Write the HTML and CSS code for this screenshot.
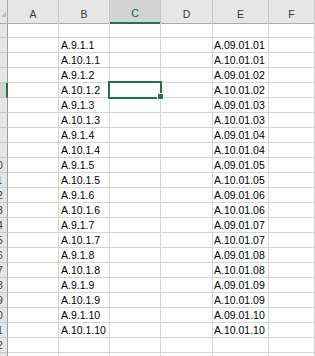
FILE: index.html
```html
<!DOCTYPE html>
<html>
<head>
<meta charset="utf-8">
<link rel="stylesheet" href="styles.css">
</head>
<body>
<div class="sheet">
  <div class="row head">
    <div class="corner"><svg class="tri" width="8" height="23" viewBox="0 0 8 23"><polygon points="6,12 6,17 1,17" fill="#b8b8b8"/></svg></div>
    <div class="ch">A</div><div class="ch">B</div><div class="ch sel">C</div><div class="ch">D</div><div class="ch">E</div><div class="ch">F</div>
  </div>
  <div class="row"><div class="rh"><span class="rn">1</span></div><div class="c"></div><div class="c"></div><div class="c"></div><div class="c"></div><div class="c"></div><div class="c"></div></div>
  <div class="row"><div class="rh"><span class="rn">2</span></div><div class="c"></div><div class="c">A.9.1.1</div><div class="c"></div><div class="c"></div><div class="c e">A.09.01.01</div><div class="c"></div></div>
  <div class="row"><div class="rh"><span class="rn">3</span></div><div class="c"></div><div class="c">A.10.1.1</div><div class="c"></div><div class="c"></div><div class="c e">A.10.01.01</div><div class="c"></div></div>
  <div class="row"><div class="rh"><span class="rn">4</span></div><div class="c"></div><div class="c">A.9.1.2</div><div class="c"></div><div class="c"></div><div class="c e">A.09.01.02</div><div class="c"></div></div>
  <div class="row"><div class="rh selrow"><span class="rn">5</span></div><div class="c"></div><div class="c">A.10.1.2</div><div class="c"></div><div class="c"></div><div class="c e">A.10.01.02</div><div class="c"></div></div>
  <div class="row"><div class="rh"><span class="rn">6</span></div><div class="c"></div><div class="c">A.9.1.3</div><div class="c"></div><div class="c"></div><div class="c e">A.09.01.03</div><div class="c"></div></div>
  <div class="row"><div class="rh"><span class="rn">7</span></div><div class="c"></div><div class="c">A.10.1.3</div><div class="c"></div><div class="c"></div><div class="c e">A.10.01.03</div><div class="c"></div></div>
  <div class="row"><div class="rh"><span class="rn">8</span></div><div class="c"></div><div class="c">A.9.1.4</div><div class="c"></div><div class="c"></div><div class="c e">A.09.01.04</div><div class="c"></div></div>
  <div class="row"><div class="rh"><span class="rn">9</span></div><div class="c"></div><div class="c">A.10.1.4</div><div class="c"></div><div class="c"></div><div class="c e">A.10.01.04</div><div class="c"></div></div>
  <div class="row"><div class="rh"><span class="rn">10</span></div><div class="c"></div><div class="c">A.9.1.5</div><div class="c"></div><div class="c"></div><div class="c e">A.09.01.05</div><div class="c"></div></div>
  <div class="row"><div class="rh"><span class="rn">11</span></div><div class="c"></div><div class="c">A.10.1.5</div><div class="c"></div><div class="c"></div><div class="c e">A.10.01.05</div><div class="c"></div></div>
  <div class="row"><div class="rh"><span class="rn">12</span></div><div class="c"></div><div class="c">A.9.1.6</div><div class="c"></div><div class="c"></div><div class="c e">A.09.01.06</div><div class="c"></div></div>
  <div class="row"><div class="rh"><span class="rn">13</span></div><div class="c"></div><div class="c">A.10.1.6</div><div class="c"></div><div class="c"></div><div class="c e">A.10.01.06</div><div class="c"></div></div>
  <div class="row"><div class="rh"><span class="rn">14</span></div><div class="c"></div><div class="c">A.9.1.7</div><div class="c"></div><div class="c"></div><div class="c e">A.09.01.07</div><div class="c"></div></div>
  <div class="row"><div class="rh"><span class="rn">15</span></div><div class="c"></div><div class="c">A.10.1.7</div><div class="c"></div><div class="c"></div><div class="c e">A.10.01.07</div><div class="c"></div></div>
  <div class="row"><div class="rh"><span class="rn">16</span></div><div class="c"></div><div class="c">A.9.1.8</div><div class="c"></div><div class="c"></div><div class="c e">A.09.01.08</div><div class="c"></div></div>
  <div class="row"><div class="rh"><span class="rn">17</span></div><div class="c"></div><div class="c">A.10.1.8</div><div class="c"></div><div class="c"></div><div class="c e">A.10.01.08</div><div class="c"></div></div>
  <div class="row"><div class="rh"><span class="rn">18</span></div><div class="c"></div><div class="c">A.9.1.9</div><div class="c"></div><div class="c"></div><div class="c e">A.09.01.09</div><div class="c"></div></div>
  <div class="row"><div class="rh"><span class="rn">19</span></div><div class="c"></div><div class="c">A.10.1.9</div><div class="c"></div><div class="c"></div><div class="c e">A.10.01.09</div><div class="c"></div></div>
  <div class="row"><div class="rh"><span class="rn">20</span></div><div class="c"></div><div class="c">A.9.1.10</div><div class="c"></div><div class="c"></div><div class="c e">A.09.01.10</div><div class="c"></div></div>
  <div class="row"><div class="rh"><span class="rn">21</span></div><div class="c"></div><div class="c">A.10.1.10</div><div class="c"></div><div class="c"></div><div class="c e">A.10.01.10</div><div class="c"></div></div>
  <div class="row"><div class="rh"><span class="rn">22</span></div><div class="c"></div><div class="c"></div><div class="c"></div><div class="c"></div><div class="c"></div><div class="c"></div></div>
  <div class="row"><div class="rh"><span class="rn">23</span></div><div class="c"></div><div class="c"></div><div class="c"></div><div class="c"></div><div class="c"></div><div class="c"></div></div>
  <div class="selbox"></div>
  <div class="handle"></div>
</div>
</body>
</html>
```
FILE: styles.css
```css
* { box-sizing: border-box; }
html, body { margin: 0; padding: 0; background: #fff; overflow: hidden; }
body {
  font-family: "Liberation Sans", Arial, sans-serif;
  font-size: 10.5px;
  color: #000;
}
.sheet { position: relative; width: 315px; }
.row {
  display: grid;
  grid-template-columns: 8px 51px 51px 51px 52px 56px 1fr;
  height: 15px;
}
.row.head { height: 23px; }
.corner {
  background: #e6e6e6;
  border-right: 1px solid #a8a8a8;
  border-bottom: 1px solid #ababab;
  position: relative;
}
.tri { display: block; }
.ch {
  background: #e6e6e6;
  border-right: 1px solid #c8c8c8;
  border-bottom: 1px solid #ababab;
  display: flex;
  align-items: flex-end;
  justify-content: center;
  padding-bottom: 2px;
  line-height: 13px;
  color: #3a3a3a;
}
.ch.sel {
  background: #d3d3d3;
  border-bottom: 2px solid #217346;
  color: #1f5c3a;
}
.rh {
  background: #e6e6e6;
  border-right: 1px solid #9e9e9e;
  border-bottom: 1px solid #c8c8c8;
  overflow: hidden;
  line-height: 13px;
  padding-top: 1px;
}
.rh.selrow {
  background: #d3d3d3;
  border-right: 2px solid #217346;
}
.rn {
  display: block;
  width: 20px;
  margin-left: -13px;
  text-align: center;
  color: #3a3a3a;
}
.c {
  border-right: 1px solid #d4d4d4;
  border-bottom: 1px solid #d4d4d4;
  padding-left: 2px;
  padding-top: 1px;
  line-height: 13px;
  white-space: nowrap;
  overflow: hidden;
}
.c.e { padding-left: 1px; }
.selbox {
  position: absolute;
  left: 108px;
  top: 81px;
  width: 54px;
  height: 18px;
  border: 2px solid #217346;
}
.handle {
  position: absolute;
  left: 157px;
  top: 93px;
  width: 7px;
  height: 7px;
  background: #217346;
  border: 1px solid #fff;
}
```
